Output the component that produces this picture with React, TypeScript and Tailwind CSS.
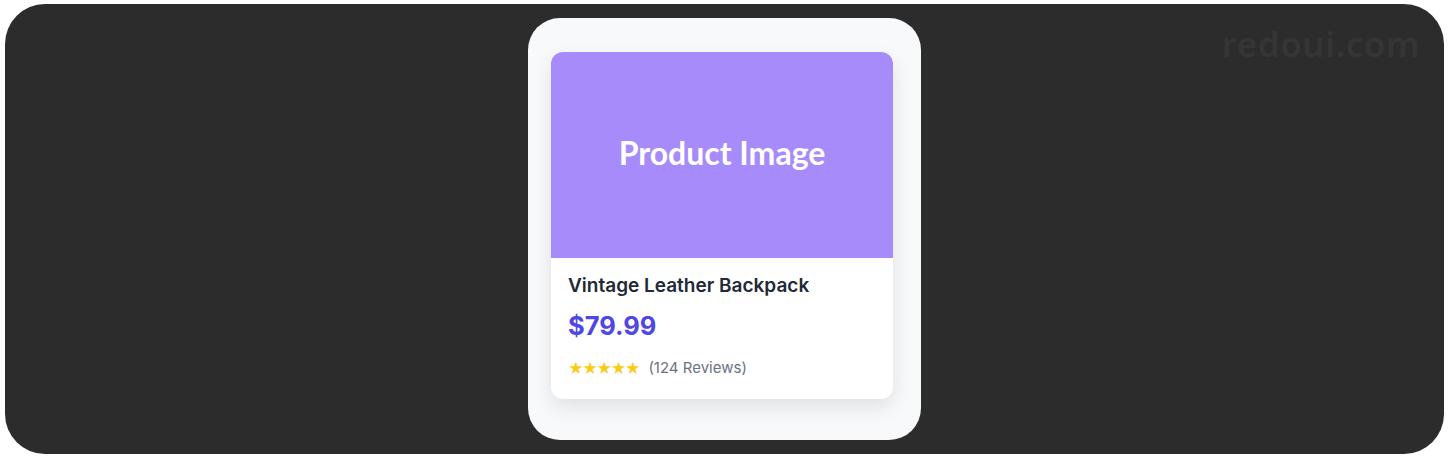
import React from "react";

const Stars = () => (
  <span className="flex items-center text-[#facc15] text-[15px] leading-none tracking-[-1.4px]">
    {"★★★★★"}
  </span>
);

export default function App() {
  return (
    <div className="w-[1449px] h-[459px] bg-white p-[4px] pl-[5px] pr-[5px]">
      <div className="relative w-full h-[450px] rounded-[40px] bg-[#2c2c2c] flex justify-center pt-[14px]">
        <div
          className="absolute right-[24px] top-[14px] text-[35px] font-semibold text-[#353535] tracking-[0.5px] select-none"
          style={{ fontFamily: '"Noto Sans", sans-serif' }}
        >
          redoui.com
        </div>

        <div className="w-[393px] h-[422px] rounded-[32px] bg-[#f8f9fb] pt-[34px] pl-[23px]">
          <div
            className="w-[342px] rounded-[12px] bg-white overflow-hidden shadow-[0_8px_20px_rgba(0,0,0,0.10)]"
            style={{ fontFamily: "Inter, sans-serif" }}
          >
            <div className="h-[206px] bg-[#a78bfa] flex items-center justify-center pb-[4px]">
              <span
                className="text-white text-[32px] font-bold"
                style={{ fontFamily: "Lato, sans-serif" }}
              >
                Product Image
              </span>
            </div>
            <div className="px-[17px] pt-[16px] pb-[21px]">
              <h3 className="text-[19px] font-semibold text-[#1f2937] leading-[24px]">
                Vintage Leather Backpack
              </h3>
              <p className="mt-[12px] text-[25.5px] font-bold text-[#4f46e5] leading-[32px]">
                $79.99
              </p>
              <div className="mt-[16px] flex items-center gap-[9px]">
                <Stars />
                <span className="text-[15px] text-[#6b7280] leading-[20px]">
                  (124 Reviews)
                </span>
              </div>
            </div>
          </div>
        </div>
      </div>
    </div>
  );
}
